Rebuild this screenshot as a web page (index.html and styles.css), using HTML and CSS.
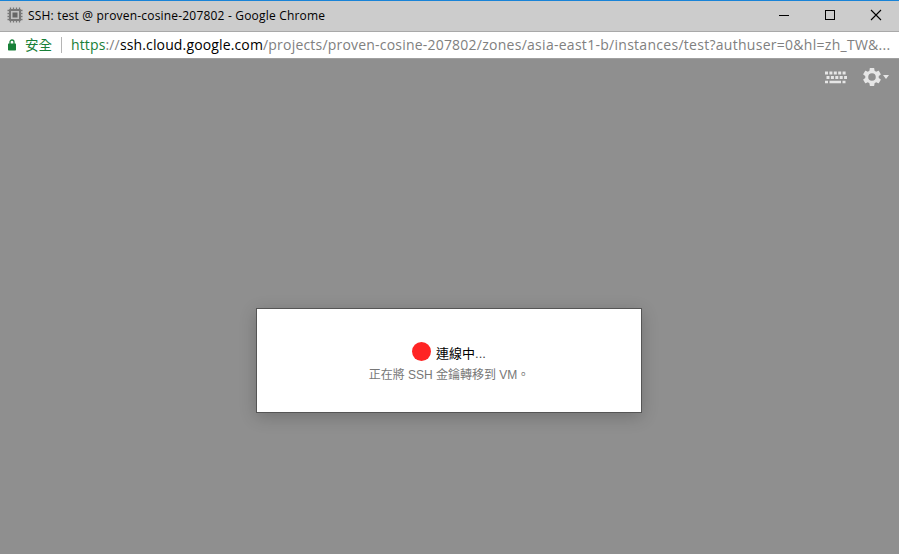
FILE: index.html
```html
<!DOCTYPE html>
<html lang="zh-TW">
<head>
<meta charset="utf-8">
<title>SSH: test @ proven-cosine-207802</title>
<link rel="stylesheet" href="styles.css">
</head>
<body>
<div class="window">
  <header class="titlebar">
    <svg class="chip" width="16" height="16" viewBox="0 0 16 16">
      <path d="M3.500 .5v15M6.500 .5v15M9.500 .5v15M12.500 .5v15M.5 3.500h15M.5 6.500h15M.5 9.500h15M.5 12.500h15" stroke="#777" stroke-width="1.300"/>
      <rect x="2" y="2" width="12" height="12" rx="1" fill="#777"/>
      <rect x="4" y="4" width="8" height="8" fill="#c0c0c0"/>
      <rect x="5.500" y="5.500" width="5" height="5" fill="#666"/>
    </svg>
    <span class="title">SSH: test @ proven-cosine-207802 - Google Chrome</span>
    <div class="controls">
      <svg width="46" height="28" viewBox="0 0 46 28"><path d="M18 14.500h10" stroke="#000"/></svg>
      <svg width="46" height="28" viewBox="0 0 46 28"><rect x="18.500" y="9.500" width="9" height="9" fill="none" stroke="#000"/></svg>
      <svg width="46" height="28" viewBox="0 0 46 28"><path d="M18 9l10 10M28 9l-10 10" stroke="#000" stroke-width="1.100"/></svg>
    </div>
  </header>
  <div class="address">
    <svg class="lock" width="8" height="12" viewBox="0 0 8 12">
      <path d="M2 5V3a2 2 0 0 1 4 0v2" fill="none" stroke="#188038" stroke-width="1.300"/>
      <rect x="0" y="4.500" width="8" height="7" rx=".7" fill="#188038"/>
    </svg>
    <span class="secure">安全</span>
    <span class="divider"></span>
    <span class="url"><span class="scheme">https</span><span class="sep">://</span><span class="host">ssh.cloud.google.com</span><span class="path">/projects/proven-cosine-207802</span><span class="path path-end">/zones/asia-east1-b/instances/test?authuser=0&amp;hl=zh_TW&amp;...</span></span>
  </div>
  <main class="terminal">
    <div class="tools">
      <svg class="keyboard" width="22" height="13" viewBox="0 0 22 13">
        <g fill="none" stroke="#e6e6e6" stroke-width="3">
          <path d="M0 2h21" stroke-dasharray="3 1.400"/>
          <path d="M1.500 6.500h20.500" stroke-dasharray="3 1.400"/>
          <path d="M0 11h3M4.500 11h11.500M17.500 11h3" stroke-width="2.600"/>
        </g>
      </svg>
      <svg class="gear" width="18" height="18" viewBox="2 2 20 20">
        <path fill="#e6e6e6" d="M19.430 12.980c.04-.32.07-.64.07-.98s-.03-.66-.07-.98l2.110-1.650c.19-.15.24-.42.12-.64l-2-3.460c-.12-.22-.39-.3-.61-.22l-2.490 1c-.52-.4-1.080-.73-1.690-.98l-.38-2.650C14.460 2.180 14.250 2 14 2h-4c-.25 0-.46.18-.49.42l-.38 2.650c-.61.25-1.170.59-1.690.98l-2.490-1c-.23-.09-.49 0-.61.22l-2 3.460c-.13.22-.07.49.12.64l2.110 1.650c-.04.32-.07.65-.07.98s.03.66.07.98l-2.110 1.650c-.19.15-.24.42-.12.64l2 3.460c.12.22.39.3.61.22l2.490-1c.52.4 1.080.73 1.690.98l.38 2.650c.03.24.24.42.49.42h4c.25 0 .46-.18.49-.42l.38-2.650c.61-.25 1.170-.59 1.690-.98l2.490 1c.23.09.49 0 .61-.22l2-3.460c.12-.22.07-.49-.12-.64l-2.110-1.650zM12 16.200a4.200 4.200 0 1 1 0-8.400 4.200 4.200 0 0 1 0 8.400z"/>
      </svg>
      <svg class="caret" width="6" height="4" viewBox="0 0 6 4"><path d="M0 0h6L3 4z" fill="#e6e6e6"/></svg>
    </div>
    <section class="dialog">
      <div class="status"><span class="dot"></span><span class="state">連線中<span class="dots">...</span></span></div>
      <p class="detail">正在將 SSH 金鑰轉移到 VM。</p>
    </section>
  </main>
</div>
</body>
</html>
```

FILE: styles.css
```css
* { box-sizing: border-box; }
body { margin: 0; overflow: hidden; }
.window {
  display: flex;
  flex-direction: column;
  width: 899px;
  height: 554px;
  font-family: "Open Sans", "Noto Sans CJK TC", sans-serif;
}
.titlebar {
  display: flex;
  align-items: center;
  height: 32px;
  padding-left: 7px;
  background: #ccc;
  border-top: 1px solid #1883d7;
  border-bottom: 1px solid #a9a9a9;
}
.chip { flex: none; margin-top: -2px; }
.title {
  margin-left: 5px;
  font-size: 12px;
  line-height: 28px;
  letter-spacing: .19px;
  white-space: nowrap;
  color: #000;
}
.controls { display: flex; height: 28px; margin: -2px 0 0 auto; }
.address {
  display: flex;
  align-items: center;
  height: 26px;
  padding-left: 8px;
  background: #fff;
}
.lock { flex: none; }
.secure { width: 27px; margin-left: 9px; font-size: 13.500px; line-height: 26px; color: #188038; }
.divider { width: 1px; height: 16px; margin: 0 9px; background: #b5b5b5; }
.url { font-size: 14px; line-height: 26px; letter-spacing: .14px; white-space: nowrap; }
.scheme { color: #188038; }
.sep, .path { color: #808080; }
.path { letter-spacing: .2px; }
.path-end { letter-spacing: .28px; }
.host { color: #000; }
.terminal {
  flex: 1;
  display: flex;
  flex-direction: column;
  align-items: center;
  background: #8f8f8f;
  border-top: 1px solid #a0a0a0;
}
.tools {
  display: flex;
  align-items: center;
  align-self: flex-end;
  height: 20px;
  margin: 8px 10px 0 0;
}
.gear { margin-left: 16px; }
.caret { margin-left: 2px; }
.dialog {
  width: 386px;
  height: 105px;
  margin: 221px 0 0 -1px;
  padding-top: 33px;
  background: #fff;
  border: 1px solid #555;
  box-shadow: 0 4px 16px rgba(0, 0, 0, .2);
  font-family: "Liberation Sans", "Noto Sans CJK TC", sans-serif;
}
.status { display: flex; justify-content: center; height: 20px; }
.dot { width: 19px; height: 19px; border-radius: 50%; background: #ff2424; }
.state { margin-left: 5px; font-size: 13px; line-height: 24px; color: #000; }
.dots { color: #444; }
.detail {
  margin: 3px 0 0;
  font-size: 12px;
  line-height: 20px;
  text-align: center;
  color: #777;
}
```
